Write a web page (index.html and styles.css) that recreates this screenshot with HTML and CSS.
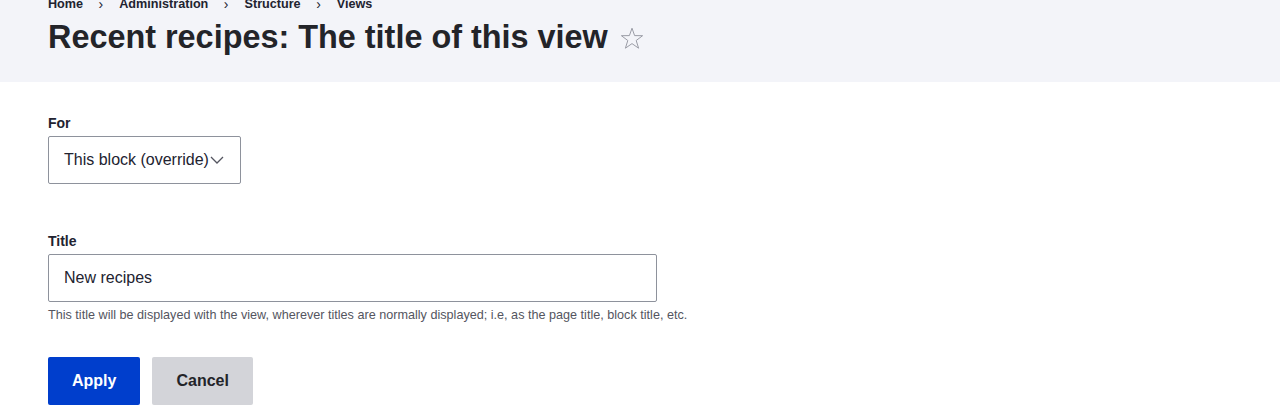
FILE: index.html
```html
<!DOCTYPE html>
<html lang="en">
<head>
<meta charset="utf-8">
<title>Recent recipes</title>
<link rel="stylesheet" href="styles.css">
</head>
<body>
<header class="page-header">
  <nav class="breadcrumb">
    <a class="crumb" href="#">Home</a>
    <span class="sep">›</span>
    <a class="crumb" href="#">Administration</a>
    <span class="sep">›</span>
    <a class="crumb" href="#">Structure</a>
    <span class="sep">›</span>
    <a class="crumb" href="#">Views</a>
  </nav>
  <div class="title-row">
    <h1 class="page-title">Recent recipes: The title of this view</h1>
    <svg class="star" width="24" height="23" viewBox="0 0 24 23" aria-hidden="true">
      <path d="M12 1.2 L14.6 8.6 L22.6 8.7 L16.2 13.5 L18.6 21.2 L12 16.6 L5.4 21.2 L7.8 13.5 L1.4 8.7 L9.4 8.6 Z" fill="none" stroke="#9a9ca6" stroke-width="1" stroke-linejoin="miter"/>
    </svg>
  </div>
</header>
<main class="form">
  <div class="field">
    <label class="label">For</label>
    <div class="select">
      <span>This block (override)</span>
      <svg class="chev" width="14" height="8" viewBox="0 0 14 8" aria-hidden="true">
        <path d="M1 1 L7 7 L13 1" fill="none" stroke="#545560" stroke-width="1.3"/>
      </svg>
    </div>
  </div>
  <div class="field field-title">
    <label class="label" for="title">Title</label>
    <input class="text-input" id="title" type="text" value="New recipes">
    <div class="description">This title will be displayed with the view, wherever titles are normally displayed; i.e, as the page title, block title, etc.</div>
  </div>
  <div class="actions">
    <button class="button button-primary" type="button">Apply</button>
    <button class="button button-secondary" type="button">Cancel</button>
  </div>
</main>
</body>
</html>
```
FILE: styles.css
```css
html, body {
  margin: 0;
  padding: 0;
  background: #ffffff;
  font-family: "Liberation Sans", Arial, sans-serif;
  color: #222330;
}

.page-header {
  display: flex;
  flex-direction: column;
  height: 82px;
  box-sizing: border-box;
  padding: 0 48px;
  background: #f3f4f9;
}

.breadcrumb {
  display: flex;
  align-items: center;
  margin-top: -4px;
  height: 16px;
  font-size: 12.64px;
  font-weight: bold;
  line-height: 16px;
}

.crumb {
  color: #222330;
  text-decoration: none;
}

.sep {
  margin: 0 16px 0 15.5px;
  font-weight: normal;
  font-size: 14px;
}

.title-row {
  display: flex;
  align-items: center;
  margin-top: 5px;
  height: 40px;
}

.page-title {
  margin: 0;
  font-size: 32.4px;
  line-height: 40px;
  font-weight: bold;
  color: #232429;
}

.star {
  margin-left: 12px;
  margin-top: 2px;
}

.form {
  padding: 32px 48px 0;
}

.field {
  display: flex;
  flex-direction: column;
  align-items: flex-start;
}

.field-title {
  margin-top: 48px;
}

.label {
  font-size: 14px;
  font-weight: bold;
  line-height: 18px;
  margin-bottom: 4px;
}

.select {
  display: flex;
  align-items: center;
  box-sizing: border-box;
  width: 193px;
  height: 48px;
  padding: 0 0 0 15px;
  border: 1px solid #8e929c;
  border-radius: 2px;
  font-size: 16px;
  color: #222330;
  background: #ffffff;
}

.chev {
  margin-left: 1px;
}

.text-input {
  box-sizing: border-box;
  width: 609px;
  height: 48px;
  margin: 0;
  padding: 0 15px;
  border: 1px solid #8e929c;
  border-radius: 2px;
  font-family: "Liberation Sans", Arial, sans-serif;
  font-size: 16px;
  color: #222330;
  background: #ffffff;
}

.description {
  margin-top: 5px;
  font-size: 12.64px;
  line-height: 17px;
  color: #545560;
}

.actions {
  display: flex;
  gap: 12px;
  margin-top: 33px;
}

.button {
  height: 48px;
  padding: 0 24px;
  border: 0;
  border-radius: 2px;
  font-family: "Liberation Sans", Arial, sans-serif;
  font-size: 16px;
  font-weight: bold;
  cursor: pointer;
}

.button-primary {
  background: #003ecc;
  color: #ffffff;
}

.button-secondary {
  background: #d3d4d9;
  color: #232429;
}
```
